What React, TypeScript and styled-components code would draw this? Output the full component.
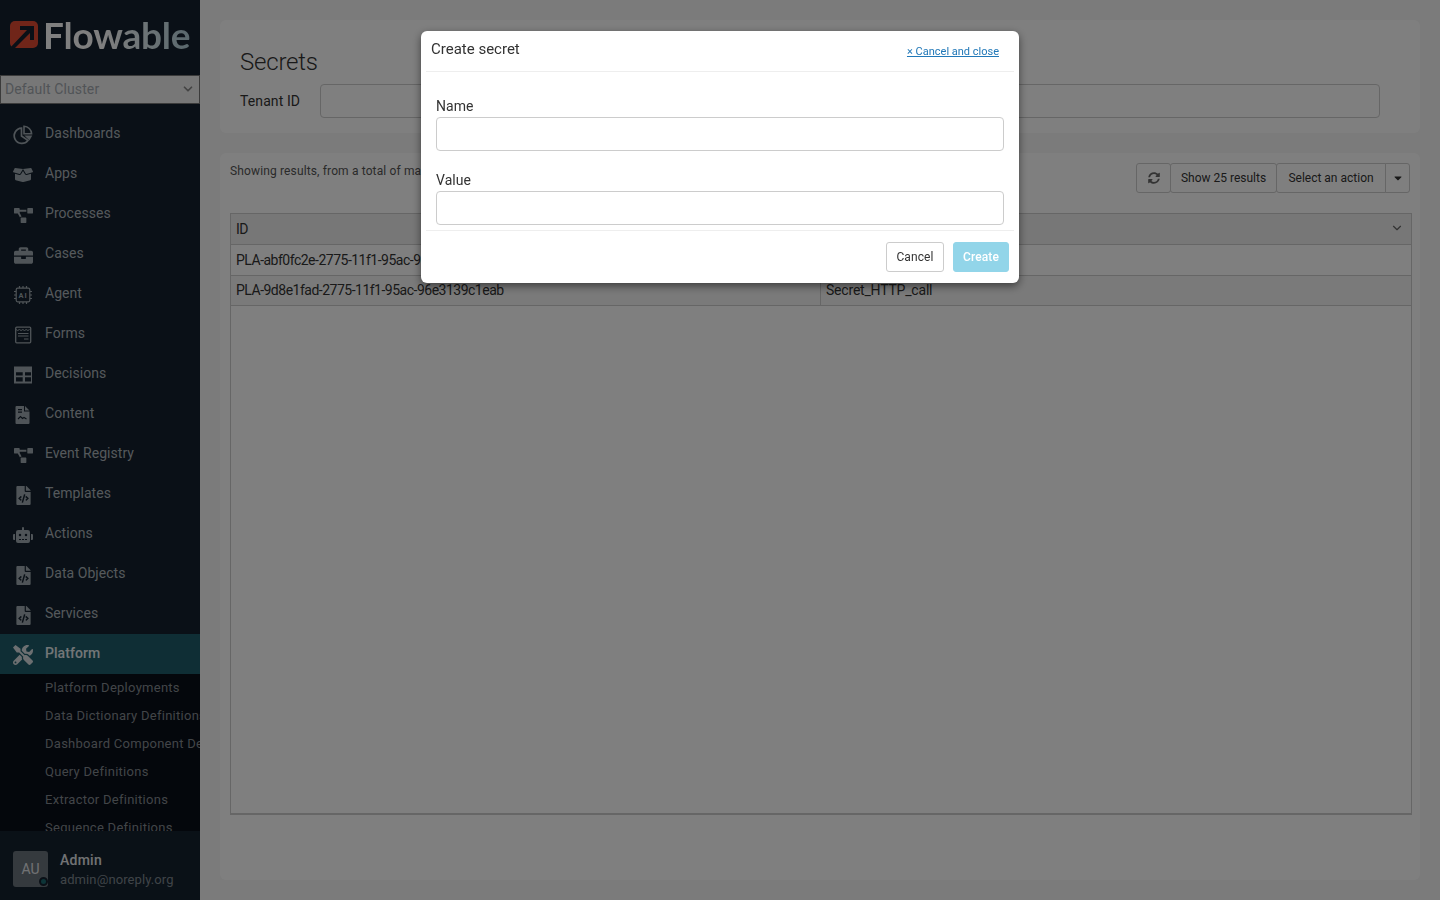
import React from "react";
import styled, { createGlobalStyle } from "styled-components";
import {
  FaBoxOpen,
  FaBriefcase,
  FaCaretDown,
  FaFileCode,
  FaProjectDiagram,
  FaRobot,
  FaSyncAlt,
  FaTools,
} from "react-icons/fa";
import { FiChevronDown } from "react-icons/fi";

const FONT = `Roboto, "Noto Sans", "Liberation Sans", sans-serif`;

const Global = createGlobalStyle`
  html, body { margin: 0; padding: 0; height: 100%; overflow: hidden; }
  body { font-family: ${FONT}; color: #333; background: #f6f6f6; }
  * { box-sizing: border-box; }
`;

const Page = styled.div`
  display: flex;
  width: 100%;
  height: 100vh;
`;

const Sidebar = styled.aside`
  width: 200px;
  flex: none;
  height: 100%;
  display: flex;
  flex-direction: column;
  background: #14212e;
`;

const LogoRow = styled.div`
  height: 75px;
  flex: none;
  display: flex;
  align-items: center;
  padding: 0 0 6px 8px;
  gap: 4px;
`;

const LogoText = styled.span`
  font-family: Lato, sans-serif;
  font-size: 37px;
  line-height: 1;
  letter-spacing: -0.2px;
  font-weight: 700;
  background: linear-gradient(90deg, #fff 0%, #fff 40%, #b4d0da 100%);
  -webkit-background-clip: text;
  background-clip: text;
  color: transparent;
`;

const ClusterBox = styled.div`
  height: 29px;
  flex: none;
  width: 200px;
  margin-bottom: 10px;
  padding: 0 4px 2px;
  display: flex;
  align-items: center;
  justify-content: space-between;
  background: #efefef;
  border: 1px solid #767676;
  font-size: 14px;
  letter-spacing: 0.12px;
  color: #a3a9af;
`;

const Scroller = styled.div`
  flex: 1;
  min-height: 0;
  overflow: hidden;
`;

const NavItem = styled.div<{ $active?: boolean }>`
  height: 40px;
  display: flex;
  align-items: center;
  gap: 12px;
  padding: 0 0 2px 13px;
  font-size: 14px;
  letter-spacing: 0.05px;
  color: ${(p) => (p.$active ? "#e6ecef" : "#aab2b8")};
  background: ${(p) => (p.$active ? "#1e5d6b" : "transparent")};
  font-weight: ${(p) => (p.$active ? 500 : 400)};
`;

const IconSlot = styled.span<{ $active?: boolean }>`
  width: 20px;
  height: 20px;
  flex: none;
  display: flex;
  align-items: center;
  justify-content: center;
  color: ${(p) => (p.$active ? "#d9dfe2" : "#9fa9b0")};
  margin-top: 4px;
`;

const SubMenu = styled.div`
  background: #080e18;
  padding: 0 0 0 45px;
  white-space: nowrap;
  overflow: hidden;
`;

const SubItem = styled.div`
  height: 28px;
  display: flex;
  align-items: center;
  padding-bottom: 2px;
  font-size: 13px;
  letter-spacing: 0.27px;
  color: #848a91;
`;

const UserBar = styled.div`
  height: 69px;
  flex: none;
  display: flex;
  align-items: center;
  gap: 12px;
  padding: 7px 0 0 13px;
  background: #15232f;
`;

const Avatar = styled.div`
  width: 35px;
  height: 36px;
  border-radius: 3px;
  background: #6b747c;
  color: #e2e5e8;
  font-size: 14px;
  position: relative;
  display: flex;
  align-items: center;
  justify-content: center;
`;

const StatusDot = styled.span`
  position: absolute;
  right: 0;
  bottom: 1px;
  width: 9px;
  height: 9px;
  border-radius: 50%;
  border: 2px solid #14212e;
  background: #1a6a70;
`;

const UserInfo = styled.div`
  padding-top: 1px;
`;

const UserName = styled.div`
  font-size: 14px;
  font-weight: 500;
  letter-spacing: 0.25px;
  color: #e2e5e8;
  line-height: 20px;
`;

const UserMail = styled.div`
  font-size: 13px;
  letter-spacing: 0.1px;
  color: #7f888f;
  line-height: 20px;
`;

const Main = styled.main`
  flex: 1;
  min-width: 0;
  padding: 20px;
  display: flex;
  flex-direction: column;
  gap: 20px;
`;

const Panel = styled.section`
  background: #ffffff;
  border-radius: 6px;
`;

const FilterPanel = styled(Panel)`
  height: 113px;
  flex: none;
  padding: 27px 40px 0 20px;
`;

const Heading = styled.h1`
  margin: 0;
  height: 37px;
  font-size: 24px;
  line-height: 30px;
  letter-spacing: -0.2px;
  font-weight: 300;
  color: #333;
`;

const FilterRow = styled.div`
  display: flex;
  align-items: center;
  gap: 20px;
`;

const FilterLabel = styled.label`
  font-size: 14px;
  letter-spacing: 0.1px;
  color: #333;
  width: 60px;
  white-space: nowrap;
`;

const FieldInput = styled.div`
  flex: none;
  height: 34px;
  background: #fff;
  border: 1px solid #ccc;
  border-radius: 4px;
`;

const FilterInput = styled(FieldInput)`
  flex: 1;
`;

const ResultsPanel = styled(Panel)`
  flex: 1;
  min-height: 0;
  padding: 10px 8px 65px 10px;
  display: flex;
  flex-direction: column;
`;

const ToolbarRow = styled.div`
  height: 50px;
  flex: none;
  display: flex;
  align-items: flex-start;
  justify-content: space-between;
  padding-right: 2px;
`;

const ResultsNote = styled.div`
  font-size: 12px;
  line-height: 16px;
  letter-spacing: 0.14px;
  color: #555;
`;

const ButtonGroup = styled.div`
  display: flex;
`;

const ToolButton = styled.div<{ $w: number }>`
  width: ${(p) => p.$w}px;
  height: 30px;
  display: flex;
  align-items: center;
  justify-content: center;
  font-size: 12px;
  letter-spacing: 0;
  color: #333;
  background: #fff;
  border: 1px solid #ccc;
  border-radius: 3px;
  & + & {
    margin-left: -1px;
  }
`;

const SplitLeft = styled(ToolButton)`
  border-radius: 3px 0 0 3px;
`;

const SplitRight = styled(ToolButton)`
  border-radius: 0 3px 3px 0;
`;

const Table = styled.div`
  flex: 1;
  border: 1px solid #ccc;
  border-bottom-width: 2px;
  background: #fff;
`;

const Row = styled.div<{ $head?: boolean; $shade?: boolean }>`
  display: grid;
  grid-template-columns: 589px 1fr;
  height: ${(p) => (p.$head ? "31px" : "30.5px")};
  padding-bottom: ${(p) => (p.$head ? "1px" : "0")};
  background: ${(p) => (p.$head ? "#eeeeee" : p.$shade ? "#f5f5f5" : "#fff")};
  border-bottom: 1px solid #ccc;
  font-size: 14px;
  color: #333;
`;

const Cell = styled.div<{ $divide?: boolean }>`
  display: flex;
  align-items: center;
  justify-content: space-between;
  padding: 0 5px;
  white-space: nowrap;
  overflow: hidden;
  letter-spacing: ${(p) => (p.$divide ? "-0.2px" : "-0.5px")};
  border-left: ${(p) => (p.$divide ? "1px solid #ccc" : "0")};
`;

const Overlay = styled.div`
  position: fixed;
  inset: 0;
  background: rgba(0, 0, 0, 0.5);
  display: flex;
  justify-content: center;
  align-items: flex-start;
  padding-top: 31px;
`;

const Modal = styled.div`
  width: 598px;
  height: 252px;
  background: #fff;
  border-radius: 6px;
  box-shadow: 0 3px 9px rgba(0, 0, 0, 0.5);
  display: flex;
  flex-direction: column;
`;

const ModalHeader = styled.div`
  height: 41px;
  flex: none;
  margin: 0 5px;
  padding: 0 15px 0 5px;
  display: flex;
  justify-content: space-between;
  align-items: center;
  border-bottom: 1px solid #eee;
`;

const ModalTitle = styled.h2`
  margin: 0 0 5px;
  font-size: 15px;
  line-height: 20px;
  font-weight: 400;
  letter-spacing: 0;
  color: #333;
`;

const CloseLink = styled.a`
  font-size: 11px;
  letter-spacing: 0;
  color: #2178b8;
  text-decoration: underline;
  cursor: pointer;
`;

const ModalBody = styled.div`
  flex: 1;
  margin: 0 5px;
  padding: 25px 10px 0;
  display: flex;
  flex-direction: column;
  gap: 20px;
  border-bottom: 1px solid #eee;
`;

const Field = styled.div`
  display: flex;
  flex-direction: column;
  gap: 2px;
`;

const FieldLabel = styled.label`
  font-size: 14px;
  line-height: 18px;
  letter-spacing: 0.05px;
  color: #333;
`;

const ModalFooter = styled.div`
  height: 52px;
  flex: none;
  padding: 11px 10px 0 0;
  display: flex;
  justify-content: flex-end;
  gap: 9px;
`;

const FooterButton = styled.button<{ $primary?: boolean }>`
  height: 30px;
  width: ${(p) => (p.$primary ? 56 : 58)}px;
  padding: 0;
  font-family: ${FONT};
  font-size: 12px;
  letter-spacing: 0.1px;
  border-radius: 3px;
  border: 1px solid ${(p) => (p.$primary ? "#92d5e9" : "#ccc")};
  background: ${(p) => (p.$primary ? "#92d5e9" : "#fff")};
  color: ${(p) => (p.$primary ? "#fff" : "#333")};
  font-weight: ${(p) => (p.$primary ? 500 : 400)};
`;

const LogoMark = () => (
  <svg width="31" height="30" viewBox="0 0 31 30">
    <rect x="2" y="1" width="28" height="27" rx="5" fill="#e04a33" />
    <path d="M1 29 19 10h-7V6h14v14h-4v-7L5 30z" fill="#14212e" />
  </svg>
);

const PieIcon = () => (
  <svg width="20" height="20" viewBox="0 0 20 20" fill="none">
    <path d="M8.5 3.2a7.600 7.600 0 1 0 6.400 12.200L8.500 11z" stroke="currentColor" strokeWidth="1.7" />
    <path d="M11 1.3a7.800 7.800 0 0 1 7.600 7.500H11z" stroke="currentColor" strokeWidth="1.6" />
    <path d="M11.3 10.6h8l-2.800 5z" fill="currentColor" />
  </svg>
);

const ChipIcon = () => (
  <svg width="20" height="20" viewBox="0 0 20 20" fill="none" stroke="currentColor" strokeWidth="1.2">
    <rect x="3.2" y="3.2" width="13.6" height="13.6" rx="1.5" />
    <path d="M6.5 1v2M10 1v2M13.5 1v2M6.5 17v2M10 17v2M13.5 17v2M1 6.5h2M1 10h2M1 13.5h2M17 6.5h2M17 10h2M17 13.5h2" />
    <text x="10" y="13" textAnchor="middle" fontSize="7.5" fontFamily={FONT} fill="currentColor" stroke="none" fontWeight="700" letterSpacing="0.8">
      AI
    </text>
  </svg>
);

const FormIcon = () => (
  <svg width="20" height="20" viewBox="0 0 20 20" fill="none" stroke="currentColor">
    <rect x="2.7" y="2.2" width="15" height="15.6" rx="1" strokeWidth="1.3" />
    <path d="M3 4.500l1.700 1 1.700-1 1.700 1 1.700-1 1.700 1 1.700-1 1.700 1 1.700-1" strokeWidth="1" />
    <path d="M5 8.500h10.500M5 11h10.500M11 14h4.500" strokeWidth="1.2" />
  </svg>
);

const TableIcon = () => (
  <svg width="20" height="20" viewBox="0 0 20 20">
    <path
      fillRule="evenodd"
      fill="currentColor"
      d="M1 1.500h18v17H1zM3 7.200v3.300h6.700V7.200zM12 7.200v3.300h6V7.200zM3 12.200v4.300h6.700v-4.300zM12 12.200v4.300h6v-4.300z"
    />
  </svg>
);

const ImageFileIcon = () => (
  <svg width="20" height="20" viewBox="0 0 20 20">
    <path
      fillRule="evenodd"
      fill="currentColor"
      d="M3.500 1H11v5.500h5.500V18a1 1 0 0 1-1 1h-12a1 1 0 0 1-1-1V2a1 1 0 0 1 1-1zM12 1l4.500 4.500H12zM5 4v1.200h4V4zM5 6.500v1.200h4V6.500z"
    />
    <path d="M5 14l2.500-2.500 2 2 1.500-1 2.500 1.500" fill="none" stroke="#14212e" strokeWidth="1.1" />
  </svg>
);

const items: { label: string; icon: React.ReactNode; active?: boolean }[] = [
  { label: "Dashboards", icon: <PieIcon /> },
  { label: "Apps", icon: <FaBoxOpen size={20} /> },
  { label: "Processes", icon: <FaProjectDiagram size={19} /> },
  { label: "Cases", icon: <FaBriefcase size={19} /> },
  { label: "Agent", icon: <ChipIcon /> },
  { label: "Forms", icon: <FormIcon /> },
  { label: "Decisions", icon: <TableIcon /> },
  { label: "Content", icon: <ImageFileIcon /> },
  { label: "Event Registry", icon: <FaProjectDiagram size={19} /> },
  { label: "Templates", icon: <FaFileCode size={19} /> },
  { label: "Actions", icon: <FaRobot size={20} /> },
  { label: "Data Objects", icon: <FaFileCode size={19} /> },
  { label: "Services", icon: <FaFileCode size={19} /> },
  { label: "Platform", icon: <FaTools size={20} />, active: true },
];

const subItems = [
  "Platform Deployments",
  "Data Dictionary Definitions",
  "Dashboard Component Definitions",
  "Query Definitions",
  "Extractor Definitions",
  "Sequence Definitions",
  "Channel Definitions",
];

export default function App() {
  return (
    <>
      <Global />
      <Page>
        <Sidebar>
          <LogoRow>
            <LogoMark />
            <LogoText>Flowable</LogoText>
          </LogoRow>
          <ClusterBox>
            Default Cluster
            <FiChevronDown size={14} strokeWidth={3} color="#888" />
          </ClusterBox>
          <Scroller>
            {items.map((item) => (
              <NavItem key={item.label} $active={item.active}>
                <IconSlot $active={item.active}>{item.icon}</IconSlot>
                {item.label}
              </NavItem>
            ))}
            <SubMenu>
              {subItems.map((label) => (
                <SubItem key={label}>{label}</SubItem>
              ))}
            </SubMenu>
          </Scroller>
          <UserBar>
            <Avatar>
              AU
              <StatusDot />
            </Avatar>
            <UserInfo>
              <UserName>Admin</UserName>
              <UserMail>admin@noreply.org</UserMail>
            </UserInfo>
          </UserBar>
        </Sidebar>
        <Main>
          <FilterPanel>
            <Heading>Secrets</Heading>
            <FilterRow>
              <FilterLabel>Tenant ID</FilterLabel>
              <FilterInput />
            </FilterRow>
          </FilterPanel>
          <ResultsPanel>
            <ToolbarRow>
              <ResultsNote>Showing results, from a total of many results</ResultsNote>
              <ButtonGroup>
                <ToolButton $w={35}>
                  <FaSyncAlt size={12} color="#666" />
                </ToolButton>
                <ToolButton $w={107}>Show 25 results</ToolButton>
                <SplitLeft $w={110}>Select an action</SplitLeft>
                <SplitRight $w={25}>
                  <FaCaretDown size={12} />
                </SplitRight>
              </ButtonGroup>
            </ToolbarRow>
            <Table>
              <Row $head>
                <Cell>ID</Cell>
                <Cell $divide>
                  Name
                  <FiChevronDown size={14} color="#666" style={{ marginRight: 2, marginBottom: 2 }} />
                </Cell>
              </Row>
              <Row>
                <Cell>PLA-abf0fc2e-2775-11f1-95ac-96e3139c1eab</Cell>
                <Cell $divide>Secret_API_key</Cell>
              </Row>
              <Row $shade>
                <Cell>PLA-9d8e1fad-2775-11f1-95ac-96e3139c1eab</Cell>
                <Cell $divide>Secret_HTTP_call</Cell>
              </Row>
            </Table>
          </ResultsPanel>
        </Main>
      </Page>
      <Overlay>
        <Modal>
          <ModalHeader>
            <ModalTitle>Create secret</ModalTitle>
            <CloseLink>× Cancel and close</CloseLink>
          </ModalHeader>
          <ModalBody>
            <Field>
              <FieldLabel>Name</FieldLabel>
              <FieldInput />
            </Field>
            <Field>
              <FieldLabel>Value</FieldLabel>
              <FieldInput />
            </Field>
          </ModalBody>
          <ModalFooter>
            <FooterButton>Cancel</FooterButton>
            <FooterButton $primary>Create</FooterButton>
          </ModalFooter>
        </Modal>
      </Overlay>
    </>
  );
}
